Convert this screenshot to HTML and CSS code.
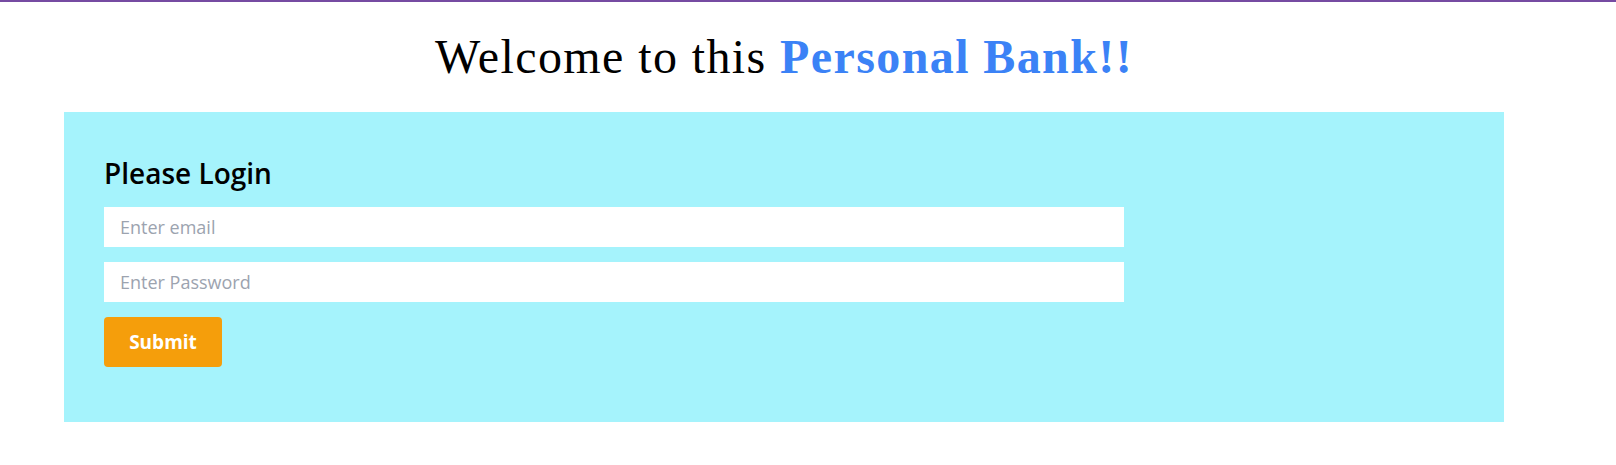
FILE: index.html
```html
<!DOCTYPE html>
<html lang="en">
<head>
<meta charset="utf-8">
<title>Personal Bank</title>
<link rel="stylesheet" href="styles.css">
</head>
<body>
  <div class="page">
    <h1 class="title">Welcome to this <span class="brand">Personal Bank!!</span></h1>
    <section class="card">
      <h2 class="card-title">Please Login</h2>
      <form class="login-form">
        <input class="field" type="email" placeholder="Enter email">
        <input class="field" type="password" placeholder="Enter Password">
        <button class="submit" type="button">Submit</button>
      </form>
    </section>
  </div>
</body>
</html>
```

FILE: styles.css
```css
* { box-sizing: border-box; }

html, body {
  margin: 0;
  padding: 0;
  background: #ffffff;
}

body {
  border-top: 2px solid #764ba2;
  font-family: "Open Sans", "Noto Sans", sans-serif;
}

.page {
  width: 1568px;
}

.title {
  margin: 27px 0 28px;
  text-align: center;
  font-family: "Liberation Serif", serif;
  font-size: 48px;
  font-weight: 400;
  line-height: 55px;
  letter-spacing: 1.4px;
  color: #000000;
}

.brand {
  color: #3b82f6;
  font-weight: 700;
}

.card {
  margin: 0 64px;
  padding: 40px 40px 55px;
  background: #a5f3fc;
}

.card-title {
  margin: 0 0 13px;
  font-size: 28px;
  line-height: 42px;
  font-weight: 600;
  color: #000000;
}

.login-form {
  display: flex;
  flex-direction: column;
  align-items: flex-start;
  gap: 15px;
}

.field {
  width: 75%;
  height: 40px;
  padding: 0 16px;
  border: none;
  outline: none;
  background: #ffffff;
  font-family: "Open Sans", "Noto Sans", sans-serif;
  font-size: 18px;
  color: #111827;
}

.field::placeholder {
  color: #9ca3af;
}

.submit {
  width: 118px;
  height: 50px;
  border: none;
  border-radius: 4px;
  background: #f59e0b;
  color: #ffffff;
  font-family: "Open Sans", "Noto Sans", sans-serif;
  font-size: 19px;
  font-weight: 700;
  cursor: pointer;
}
```
